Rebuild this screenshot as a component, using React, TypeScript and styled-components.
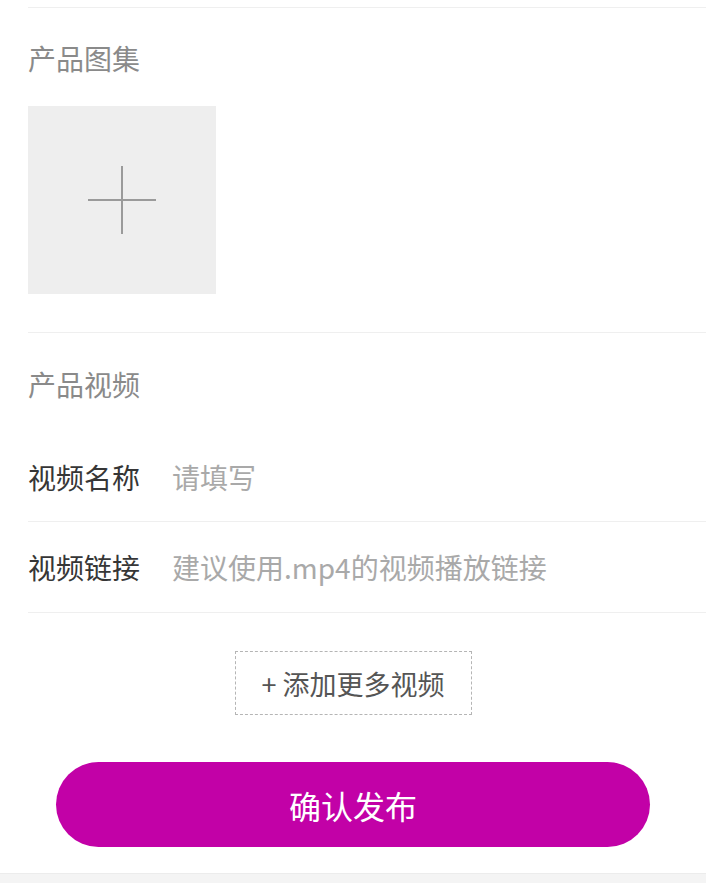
import React from "react";
import styled, { createGlobalStyle } from "styled-components";

const Global = createGlobalStyle`
  html, body { margin: 0; padding: 0; background: #ffffff; }
  body { font-family: "Noto Sans CJK SC", "Noto Sans", sans-serif; }
  * { box-sizing: border-box; }
`;

const Page = styled.div`
  width: 706px;
  min-height: 883px;
  background: #fff;
  display: flex;
  flex-direction: column;
  padding-top: 7px;
`;

const Section = styled.section<{ $padTop: number; $padBottom: number }>`
  margin-left: 28px;
  border-top: 1px solid #efefef;
  padding-top: ${(p) => p.$padTop}px;
  padding-bottom: ${(p) => p.$padBottom}px;
  display: flex;
  flex-direction: column;
`;

const SectionTitle = styled.div`
  font-size: 28px;
  line-height: 40px;
  height: 40px;
  color: #8a8a8a;
`;

const UploadBox = styled.div`
  margin-top: 28px;
  width: 188px;
  height: 188px;
  background: #eeeeee;
  display: flex;
  align-items: center;
  justify-content: center;
`;

const Spacer = styled.div<{ $h: number }>`
  height: ${(p) => p.$h}px;
`;

const FieldRow = styled.div<{ $height: number }>`
  height: ${(p) => p.$height}px;
  border-bottom: 1px solid #efefef;
  display: flex;
  align-items: center;
  gap: 32px;
`;

const FieldLabel = styled.span`
  font-size: 28px;
  color: #363636;
  flex: none;
`;

const FieldInput = styled.span`
  font-size: 28px;
  color: #a9a9a9;
`;

const AddWrap = styled.div`
  display: flex;
  justify-content: center;
  padding-top: 38px;
`;

const AddButton = styled.div`
  width: 237px;
  height: 64px;
  border: 1px dashed #b5b5b5;
  display: flex;
  align-items: center;
  justify-content: center;
  font-size: 27px;
  color: #555555;
`;

const SubmitWrap = styled.div`
  display: flex;
  justify-content: center;
  padding: 47px 0 26px 0;
`;

const SubmitButton = styled.div`
  width: 594px;
  height: 85px;
  border-radius: 43px;
  background: #c201a7;
  color: #ffffff;
  display: flex;
  align-items: center;
  justify-content: center;
  font-size: 32px;
`;

const Footer = styled.div`
  height: 10px;
  background: #f4f4f4;
  border-top: 1px solid #ececec;
`;

const PlusIcon = () => (
  <svg width="68" height="68" viewBox="0 0 68 68">
    <line x1="0" y1="34" x2="68" y2="34" stroke="#9a9a9a" strokeWidth="2" />
    <line x1="34" y1="0" x2="34" y2="68" stroke="#9a9a9a" strokeWidth="2" />
  </svg>
);

export default function App() {
  return (
    <Page>
      <Global />
      <Section $padTop={30} $padBottom={38}>
        <SectionTitle>产品图集</SectionTitle>
        <UploadBox>
          <PlusIcon />
        </UploadBox>
      </Section>
      <Section $padTop={31} $padBottom={0}>
        <SectionTitle>产品视频</SectionTitle>
        <Spacer $h={29} />
        <FieldRow $height={89}>
          <FieldLabel>视频名称</FieldLabel>
          <FieldInput>请填写</FieldInput>
        </FieldRow>
        <FieldRow $height={91}>
          <FieldLabel>视频链接</FieldLabel>
          <FieldInput>建议使用.mp4的视频播放链接</FieldInput>
        </FieldRow>
      </Section>
      <AddWrap>
        <AddButton>+ 添加更多视频</AddButton>
      </AddWrap>
      <SubmitWrap>
        <SubmitButton>确认发布</SubmitButton>
      </SubmitWrap>
      <Footer />
    </Page>
  );
}
